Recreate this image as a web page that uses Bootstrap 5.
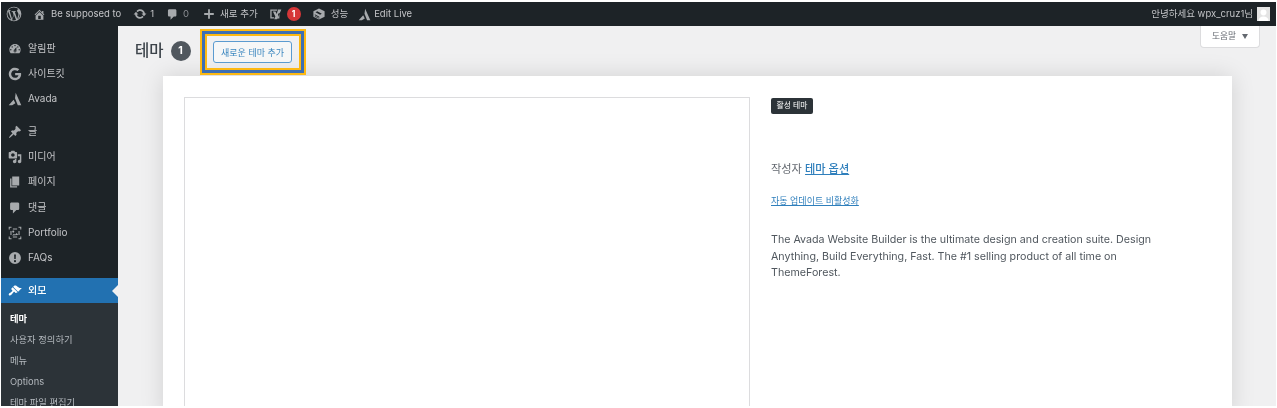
<!DOCTYPE html>
<html lang="ko">
<head>
<meta charset="utf-8">
<title>테마</title>
<link href="https://cdn.jsdelivr.net/npm/bootstrap@5.3.0/dist/css/bootstrap.min.css" rel="stylesheet">
<style>
html,body{height:408px;overflow:hidden;background:#fff}
body{font-family:Inter,"Noto Sans CJK KR",sans-serif;padding:2px 1px 2px 1px;color:#50575e}
.wp-shell{width:1275px;height:404px;overflow:hidden;background:#f0f0f1;filter:blur(.55px)}
.wp-bar{height:24px;background:#1d2327;color:#c3c4c7;font-size:9.5px;padding:0 6px 0 5px;flex:none}
.wp-bar svg{fill:#a7aaad;display:block;flex:none}
.bar-item{display:flex;align-items:center;gap:5px;white-space:nowrap}
.gap-home{margin-left:11px}
.gap-update{margin-left:12px;gap:3px}
.gap-comment{margin-left:12px;gap:4px;color:#8c8f94}
.gap-plus{margin-left:14px}
.gap-yoast{margin-left:11px}
.gap-perf{margin-left:11px}
.gap-live{margin-left:10px;gap:3px}
.gap-user{gap:4px}
.bar-num{background:#d63638;color:#fff;border-radius:50%;width:14px;height:14px;font-size:8.5px;font-weight:700;display:flex;align-items:center;justify-content:center}
.bar-avatar{width:13px;height:14px;background:#e4e4e4;overflow:hidden}
.wp-side{width:117px;background:#1d2327;flex:none;padding-top:10px;height:380px;overflow:hidden}
.side-link{height:25px;display:flex;align-items:center;gap:6px;padding-left:7px;color:#c3c4c7;font-size:10px;white-space:nowrap}
.side-link svg{width:14px;height:14px;fill:#a7aaad;flex:none}
.side-gap{height:8px}
.side-low{margin-top:1px}
.side-active{background:#2271b1;color:#fff;position:relative;margin-top:8px;font-weight:500}
.side-active svg{fill:#fff}
.side-active::after{content:"";position:absolute;right:0;top:7px;border:6px solid transparent;border-right-color:#f0f0f1;border-left:0}
.side-sub{background:#2c3338;padding:5px 0 0 9px;height:110px}
.side-sub div{height:21px;line-height:21px;font-size:9.3px;color:#b4b9be;white-space:nowrap}
.side-sub .is-here{color:#fff;font-weight:700}
.wp-main{min-width:0;height:380px;position:relative;padding:0 44px 0 45px}
.head-row{height:50px;margin-left:-28px}
.head-title{font-size:15.5px;font-weight:500;color:#3c434a;line-height:1}
.head-count{width:20px;height:20px;border-radius:50%;background:#50575e;color:#fff;font-size:10.5px;font-weight:700;display:flex;align-items:center;justify-content:center;margin-left:7px}
.mark-out{border:2px solid #fdb913;margin-left:9px;width:106px;height:46px;flex:none;margin-top:2px}
.mark-mid{border:3px solid #3d6fb4;height:100%}
.mark-in{border:2px solid #fdb913;height:100%;display:flex;align-items:center;justify-content:center}
.add-theme{border:1px solid #5b9bd0;border-radius:3px;background:#f6f7f7;color:#3a86bf;font-size:9px;width:79px;height:22px;padding:0;line-height:1}
.help-tab{position:absolute;right:16px;top:0;width:60px;height:22px;background:#fff;border:1px solid #dcdcde;border-top:0;border-radius:0 0 4px 4px;color:#646970;font-size:8.7px}
.help-tab i{display:inline-block;border:3.5px solid transparent;border-top:5px solid #646970;border-bottom:0;margin-left:6px}
.theme-panel{background:#fff;height:340px;box-shadow:0 0 22px rgba(0,0,0,.13);padding:21px 20px 0 21px}
.theme-shot{width:566px;height:340px;border:1px solid #dcdcde;flex:none}
.theme-info{padding-left:21px;width:440px}
.active-tag{background:#2c3338;color:#fff;font-size:7.8px;border-radius:2px;width:42px;height:16px;display:flex;align-items:center;justify-content:center;margin-top:1px}
.theme-author{font-size:11.2px;margin-top:46px;line-height:18px;color:#646970}
.theme-author a{color:#2f7fbc;font-weight:500}
.auto-link{display:block;font-size:9px;color:#2f7fbc;margin-top:16px;line-height:14px}
.theme-desc{font-size:10.7px;line-height:16.5px;margin-top:24px;color:#50575e;white-space:nowrap}
</style>
</head>
<body>
<div class="wp-shell d-flex flex-column">
  <div class="wp-bar d-flex align-items-center justify-content-between">
    <div class="d-flex align-items-center">
      <svg width="16" height="16" viewBox="0 0 20 20"><path d="M10 .8a9.2 9.2 0 1 0 0 18.400A9.200 9.200 0 0 0 10 .8zm0 1.100c2.200 0 4.200.9 5.700 2.300h-.2c-1 0-1.600.8-1.600 1.700 0 .8.4 1.400.9 2.200.4.6.7 1.400.7 2.500 0 .8-.3 1.700-.7 2.900l-.8 2.800-3.100-9.100c.5 0 1-.1 1-.1.5-.1.4-.7 0-.7 0 0-1.400.1-2.300.1-.8 0-2.300-.1-2.300-.1-.5 0-.5.7 0 .7 0 0 .4.1.9.1l1.300 3.600-1.900 5.500L4.500 5.900c.5 0 1-.1 1-.1.5-.1.4-.7 0-.7 0 0-1.400.1-2.300.1h-.5A8.100 8.100 0 0 1 10 1.900zM2.600 6.700l3.900 10.600A8.100 8.100 0 0 1 2.600 6.700zm7.500 4.100 2.400 6.700.1.100a8.100 8.100 0 0 1-5 .1zm6-4.200A8.100 8.100 0 0 1 15 16.900l2.400-7c.4-1.100.6-2 .6-2.800z"/></svg>
      <span class="bar-item gap-home"><svg width="13" height="13" viewBox="0 0 20 20"><path d="M16 8.500l1.530 1.530-1.060 1.060L10 4.620l-6.470 6.470-1.060-1.060L10 2.500l4 4v-2h2v4zm-6-2.460l6 5.990V18H4v-5.970zM12 17v-5H8v5h4z"/></svg>Be supposed to</span>
      <span class="bar-item gap-update"><svg width="14" height="14" viewBox="0 0 20 20"><path d="M10.200 3.280c3.530 0 6.430 2.610 6.920 6h2.080l-3.500 4-3.500-4h2.320c-.45-1.970-2.210-3.440-4.320-3.440-1.450 0-2.730.71-3.540 1.780L4.950 5.660C6.230 4.200 8.110 3.280 10.200 3.280zm-.4 13.440c-3.520 0-6.430-2.610-6.920-6H.8l3.500-4c1.170 1.330 2.330 2.670 3.500 4H5.480c.45 1.970 2.210 3.440 4.320 3.440 1.450 0 2.730-.71 3.540-1.780l1.710 1.950c-1.280 1.460-3.150 2.380-5.250 2.380z"/></svg>1</span>
      <span class="bar-item gap-comment"><svg width="13" height="13" viewBox="0 0 20 20"><path d="M5 2h9c1.100 0 2 .9 2 2v7c0 1.100-.9 2-2 2h-2l-5 5v-5H5c-1.100 0-2-.9-2-2V4c0-1.100.9-2 2-2z"/></svg>0</span>
      <span class="bar-item gap-plus"><svg width="12" height="12" viewBox="0 0 20 20"><path d="M8.500 2h3v6.500H18v3h-6.500V18h-3v-6.500H2v-3h6.500z"/></svg>새로 추가</span>
      <span class="bar-item gap-yoast"><svg width="13" height="14" viewBox="0 0 20 20"><path fill-rule="evenodd" d="M2 3h11l-1 2H4v10h4l-.6 2H2zM14 3h5l-6.500 15H8l1.800-4L6 6h4l1.800 4zM16 8v9h-3l1-2v-5z"/></svg><span class="bar-num">1</span></span>
      <span class="bar-item gap-perf"><svg width="14" height="14" viewBox="0 0 20 20"><path fill-rule="evenodd" d="M10 2 18 6v8l-8 4-8-4V6zM5 7.500l6.500 3.500 2.500-1.300L7.500 6.200zM4 10.500v1.200l6.500 3.500V14zM4 13v.8l6.500 3v-.8z"/></svg>성능</span>
      <span class="bar-item gap-live"><svg width="13" height="13" viewBox="0 0 20 20"><path d="M11 1 19 19h-5L10 9zM8 11l2.500 5L6 19H1z"/></svg>Edit Live</span>
    </div>
    <div class="bar-item gap-user">안녕하세요 wpx_cruz1님
      <span class="bar-avatar"><svg width="13" height="14" viewBox="0 0 13 14"><path fill="#fff" d="M6.500 2.500a3 3 0 0 1 3 3c0 1.500-1 3-3 3s-3-1.500-3-3a3 3 0 0 1 3-3zM1.500 14c0-3 2-4.500 5-4.500s5 1.500 5 4.500z"/></svg></span>
    </div>
  </div>
  <div class="d-flex flex-grow-1">
    <nav class="wp-side">
      <div class="side-link"><svg viewBox="0 0 20 20"><path d="M3.760 16h12.480c1.100-1.370 1.760-3.110 1.760-5 0-4.420-3.580-8-8-8s-8 3.580-8 8c0 1.890.66 3.630 1.760 5zM10 4c.55 0 1 .45 1 1s-.45 1-1 1-1-.45-1-1 .45-1 1-1zM6 6c.55 0 1 .45 1 1s-.45 1-1 1-1-.45-1-1 .45-1 1-1zm8 0c.55 0 1 .45 1 1s-.45 1-1 1-1-.45-1-1 .45-1 1-1zm-5.370 5.550L12 7v6c0 1.100-.9 2-2 2s-2-.9-2-2c0-.57.24-1.080.63-1.450zM4 10c.55 0 1 .45 1 1s-.45 1-1 1-1-.45-1-1 .45-1 1-1zm12 0c.55 0 1 .45 1 1s-.45 1-1 1-1-.45-1-1 .45-1 1-1zm-5 3c0-.55-.45-1-1-1s-1 .45-1 1 .45 1 1 1 1-.45 1-1z"/></svg>알림판</div>
      <div class="side-link"><svg viewBox="0 0 20 20"><path d="M18.500 8.500h-8.300v3.300h4.800c-.5 2.300-2.400 3.700-5 3.700a5.500 5.500 0 1 1 3.600-9.700l2.500-2.500A9 9 0 1 0 10 19c4.600 0 8.800-3.300 8.800-9 0-.5-.1-1-.3-1.500z"/></svg>사이트킷</div>
      <div class="side-link"><svg viewBox="0 0 20 20"><path d="M11 1 19 19h-5L10 9zM8 11l2.500 5L6 19H1z"/></svg>Avada</div>
      <div class="side-gap"></div>
      <div class="side-link"><svg viewBox="0 0 20 20"><path d="M10.440 3.020l1.820-1.820 6.360 6.350-1.830 1.820c-1.050-.68-2.480-.57-3.410.36l-.75.75c-.92.93-1.040 2.350-.35 3.410l-1.830 1.820-2.410-2.410-2.800 2.790c-.42.42-3.380 2.710-3.800 2.290s1.860-3.390 2.280-3.810l2.790-2.790L4.100 9.360l1.830-1.820c1.050.69 2.480.57 3.400-.36l.75-.75c.93-.92 1.050-2.350.36-3.410z"/></svg>글</div>
      <div class="side-link"><svg viewBox="0 0 20 20"><path d="M13 11V4c0-.55-.45-1-1-1h-1.670L9 1H5L3.670 3H2c-.55 0-1 .45-1 1v7c0 .55.45 1 1 1h10c.55 0 1-.45 1-1zM7 4.500c1.380 0 2.500 1.120 2.500 2.500S8.380 9.500 7 9.500 4.500 8.380 4.500 7 5.620 4.500 7 4.500zM14 6h5v10.500c0 1.380-1.120 2.500-2.500 2.500S14 17.880 14 16.500s1.120-2.500 2.500-2.500c.17 0 .34.020.5.050V9h-3V6zm-4 8.050V13h2v3.500c0 1.380-1.120 2.500-2.500 2.500S7 17.880 7 16.500 8.120 14 9.500 14c.17 0 .34.020.5.050z"/></svg>미디어</div>
      <div class="side-link"><svg viewBox="0 0 20 20"><path d="M6 15V2h10v13H6zm-1 1h8v2H3V5h2v11z"/></svg>페이지</div>
      <div class="side-link side-low"><svg viewBox="0 0 20 20"><path d="M5 2h9c1.100 0 2 .9 2 2v7c0 1.100-.9 2-2 2h-2l-5 5v-5H5c-1.100 0-2-.9-2-2V4c0-1.100.9-2 2-2z"/></svg>댓글</div>
      <div class="side-link"><svg viewBox="0 0 20 20"><path d="M1 1h4v1.500H2.500V5H1zm14 0h4v4h-1.500V2.500H15zM1 15h1.500v2.500H5V19H1zm16.500 0H19v4h-4v-1.500h2.500zM7 3.500h6V5H7zm0 11.500h6v1.500H7zM3.500 7H5v6H3.500zM15 7h1.500v6H15zM7.500 6.500a1.500 1.500 0 1 1 0 3 1.500 1.500 0 0 1 0-3zM6 13.500l2.500-2.500 1.500 1.500 2.500-2.500 2 3z"/></svg>Portfolio</div>
      <div class="side-link"><svg viewBox="0 0 20 20"><path d="M10 1.500a8.500 8.500 0 1 0 0 17 8.500 8.500 0 0 0 0-17zM8.700 5h2.600l-.3 6.500H9zm1.300 8a1.500 1.500 0 1 1 0 3 1.500 1.500 0 0 1 0-3z"/></svg>FAQs</div>
      <div class="side-link side-active"><svg viewBox="0 0 20 20"><path d="M14.480 11.060L7.410 3.990l1.500-1.500c.5-.56 2.300-.47 3.510.32 1.210.8 1.430 1.280 2.910 2.100 1.180.64 2.450 1.260 4.450.85zm-.71.71L6.700 4.700 4.930 6.470c-.39.39-.39 1.020 0 1.410l1.060 1.060c.39.39.39 1.030 0 1.420-.6.6-1.430 1.110-2.210 1.690-.35.26-.7.53-1.010.84C1.430 13.230.4 14.980 1.430 16s2.770 0 4.110-1.350c.3-.3.58-.65.84-1 .58-.78 1.090-1.610 1.690-2.210.39-.39 1.020-.39 1.410 0l1.060 1.060c.39.39 1.020.39 1.410 0z"/></svg>외모</div>
      <div class="side-sub">
        <div class="is-here">테마</div>
        <div>사용자 정의하기</div>
        <div>메뉴</div>
        <div>Options</div>
        <div>테마 파일 편집기</div>
      </div>
    </nav>
    <main class="wp-main flex-grow-1">
      <div class="head-row d-flex align-items-center">
        <span class="head-title">테마</span>
        <span class="head-count">1</span>
        <div class="mark-out"><div class="mark-mid"><div class="mark-in"><button class="add-theme" type="button">새로운 테마 추가</button></div></div></div>
      </div>
      <button class="help-tab" type="button">도움말<i></i></button>
      <section class="theme-panel d-flex">
        <div class="theme-shot"></div>
        <div class="theme-info">
          <span class="active-tag">활성 테마</span>
          <p class="theme-author mb-0">작성자 <a href="#">테마 옵션</a></p>
          <a class="auto-link" href="#">자동 업데이트 비활성화</a>
          <p class="theme-desc mb-0">The Avada Website Builder is the ultimate design and creation suite. Design<br>Anything, Build Everything, Fast. The #1 selling product of all time on<br>ThemeForest.</p>
        </div>
      </section>
    </main>
  </div>
</div>
</body>
</html>
